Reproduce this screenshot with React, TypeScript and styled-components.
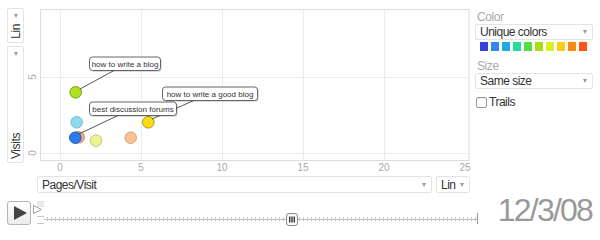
import React from 'react';
import styled, { createGlobalStyle } from 'styled-components';

const GlobalStyle = createGlobalStyle`
  html, body { margin: 0; padding: 0; background: #fff; }
  body { font-family: "Liberation Sans", Arial, sans-serif; }
`;

const Frame = styled.div`
  width: 600px;
  height: 229px;
  overflow: hidden;
  display: flex;
  flex-direction: column;
  background: #fff;
`;

const TopRow = styled.div`
  display: flex;
  height: 172px;
  padding-left: 7px;
`;

const YControls = styled.div`
  width: 17px;
  display: flex;
  flex-direction: column;
  gap: 3px;
  padding-top: 8px;
`;

const VSelect = styled.div<{ $h: number }>`
  height: ${(p) => p.$h}px;
  box-sizing: border-box;
  border: 1px solid #e4e4e4;
  border-radius: 2px;
  display: flex;
  flex-direction: column;
  align-items: center;
  justify-content: space-between;
  padding: 5px 0 3px;
`;

const VText = styled.span`
  writing-mode: vertical-rl;
  transform: rotate(180deg);
  font-size: 12px;
  letter-spacing: -0.4px;
  line-height: 14px;
  color: #333;
`;

const Arrow = styled.span`
  width: 0;
  height: 0;
  border-left: 2.5px solid transparent;
  border-right: 2.5px solid transparent;
  border-top: 4px solid #999;
`;

const ChartSvg = styled.svg`
  display: block;
  margin-left: 4px;
  width: 444px;
  height: 172px;
  flex: none;
`;

const SidePanel = styled.div`
  margin-left: 3px;
  width: 118px;
  display: flex;
  flex-direction: column;
  padding-top: 10px;
`;

const PanelLabel = styled.div<{ $mt?: number }>`
  font-size: 12px;
  letter-spacing: -0.4px;
  line-height: 14px;
  color: #aaa;
  margin-top: ${(p) => p.$mt ?? 0}px;
  padding-left: 2px;
`;

const HSelect = styled.div<{ $w: number; $h?: number }>`
  width: ${(p) => p.$w}px;
  height: ${(p) => p.$h ?? 16}px;
  box-sizing: border-box;
  border: 1px solid #e4e4e4;
  border-radius: 2px;
  display: flex;
  align-items: center;
  justify-content: space-between;
  padding: 0 5px 0 4px;
  font-size: 12px;
  letter-spacing: -0.5px;
  line-height: 14px;
  color: #333;
  flex: none;
`;

const Swatches = styled.div`
  display: flex;
  gap: 3px;
  margin-top: 2px;
  padding-left: 5px;
`;

const Swatch = styled.span<{ $c: string }>`
  width: 8px;
  height: 9px;
  background: ${(p) => p.$c};
`;

const TrailsRow = styled.label`
  display: flex;
  align-items: center;
  gap: 2px;
  margin-top: 6px;
  font-size: 12px;
  letter-spacing: -0.5px;
  line-height: 14px;
  color: #333;
  padding-left: 1px;
`;

const CheckBox = styled.span`
  width: 11px;
  height: 11px;
  box-sizing: border-box;
  border: 1px solid #999;
  border-radius: 2px;
  background: #fff;
  box-shadow: inset 0 1px 1px rgba(0, 0, 0, 0.08);
`;

const XRow = styled.div`
  display: flex;
  gap: 4px;
  margin-top: 4px;
  padding-left: 37px;
`;

const PlayRow = styled.div`
  display: flex;
  align-items: flex-start;
  margin-top: 5px;
  padding-left: 7px;
  height: 31px;
`;

const PlayButton = styled.div`
  margin-top: 3px;
  width: 24px;
  height: 24px;
  box-sizing: border-box;
  border: 1px solid #b5b5b5;
  border-radius: 3px;
  background: linear-gradient(#ffffff, #ececec);
  display: flex;
  align-items: center;
  justify-content: center;
  flex: none;
`;

const PlayTriangle = styled.span`
  width: 0;
  height: 0;
  margin-left: 2px;
  border-top: 7px solid transparent;
  border-bottom: 7px solid transparent;
  border-left: 13px solid #444;
`;

const TimelineSvg = styled.svg`
  display: block;
  width: 449px;
  height: 30px;
  flex: none;
`;

const DateLabel = styled.div`
  margin-left: auto;
  padding-right: 8px;
  font-size: 32px;
  letter-spacing: -1.8px;
  line-height: 30px;
  color: #999;
  margin-top: -3px;
`;

const swatchColors = [
  '#3344dd',
  '#3388ee',
  '#22aadd',
  '#22dd99',
  '#55dd44',
  '#aadd11',
  '#ddee22',
  '#ffcc11',
  '#ff8811',
  '#ff5511',
];

const xTicks = [
  { v: '0', x: 60 },
  { v: '5', x: 141 },
  { v: '10', x: 222 },
  { v: '15', x: 303 },
  { v: '20', x: 384 },
  { v: '25', x: 465 },
];

const yTicks = [
  { v: '5', y: 77 },
  { v: '0', y: 153 },
];

type Bubble = { x: number; y: number; fill: string; stroke: string };

const bubbles: Bubble[] = [
  { x: 78.7, y: 137.3, fill: '#f4a98c', stroke: '#c88066' },
  { x: 76.7, y: 122.3, fill: '#91d9ee', stroke: '#6fb3c8' },
  { x: 96, y: 140.7, fill: '#eef28e', stroke: '#bcbd78' },
  { x: 130.7, y: 137.7, fill: '#fdc092', stroke: '#cf9a72' },
  { x: 75.7, y: 92.3, fill: '#aee31f', stroke: '#6f9312' },
  { x: 75.3, y: 137.7, fill: '#2b7cf0', stroke: '#1b52aa' },
  { x: 148.3, y: 122.3, fill: '#fbdc12', stroke: '#a48d16' },
];

type Tip = { x: number; y: number; w: number; text: string; line: [number, number, number, number] };

const tips: Tip[] = [
  { x: 89.5, y: 57, w: 71, text: 'how to write a blog', line: [115, 70, 80, 89] },
  { x: 162.5, y: 87, w: 95, text: 'how to write a good blog', line: [195, 100, 152, 119] },
  { x: 89.5, y: 102, w: 87, text: 'best discussion forums', line: [119, 115, 79, 134] },
];

function Chart() {
  return (
    <ChartSvg viewBox="28 0 444 172">
      <rect x={40.5} y={9.5} width={428.5} height={151} fill="#fff" stroke="#dcdcdc" />
      {xTicks.slice(0, 5).map((t) => (
        <line key={'gx' + t.v} x1={t.x + 0.5} y1={10} x2={t.x + 0.5} y2={160} stroke="#ececec" />
      ))}
      {yTicks.map((t) => (
        <line key={'gy' + t.v} x1={41} y1={t.y + 0.5} x2={468.5} y2={t.y + 0.5} stroke="#ececec" />
      ))}
      {xTicks.map((t) => (
        <text
          key={'lx' + t.v}
          x={t.x}
          y={170.5}
          textAnchor="middle"
          fontSize={10}
          fill="#aaa"
          fontFamily='"Liberation Sans", Arial, sans-serif'
        >
          {t.v}
        </text>
      ))}
      {yTicks.map((t) => (
        <text
          key={'ly' + t.v}
          transform={`translate(35.5 ${t.y}) rotate(-90)`}
          textAnchor="middle"
          fontSize={10}
          fill="#aaa"
          fontFamily='"Liberation Sans", Arial, sans-serif'
        >
          {t.v}
        </text>
      ))}
      {bubbles.map((b, i) => (
        <circle key={'b' + i} cx={b.x} cy={b.y} r={5.8} fill={b.fill} stroke={b.stroke} strokeWidth={0.9} />
      ))}
      {tips.map((t) => (
        <line
          key={'l' + t.text}
          x1={t.line[0]}
          y1={t.line[1]}
          x2={t.line[2]}
          y2={t.line[3]}
          stroke="#444"
          strokeWidth={0.9}
        />
      ))}
      {tips.map((t) => (
        <g key={'t' + t.text}>
          <rect x={t.x + 1.2} y={t.y + 1.2} width={t.w} height={13.5} rx={3} fill="#000" opacity={0.18} />
          <rect x={t.x} y={t.y} width={t.w} height={13.5} rx={3} fill="#fff" stroke="#555" strokeWidth={0.9} />
          <text
            x={t.x + t.w / 2}
            y={t.y + 10}
            textAnchor="middle"
            fontSize={8}
            fill="#333"
            fontFamily='"Liberation Sans", Arial, sans-serif'
          >
            {t.text}
          </text>
        </g>
      ))}
    </ChartSvg>
  );
}

function Timeline() {
  const ticks: string[] = [];
  for (let x = 47; x < 477; x += 4) {
    ticks.push(`M${x + 0.5} 217 V221`);
  }
  return (
    <TimelineSvg viewBox="31 198 449 30">
      <rect x={37} y={201} width={7} height={6} fill="#e2e2e2" />
      <line x1={37} y1={203.5} x2={44} y2={203.5} stroke="#f4f4f4" />
      <line x1={37} y1={205.5} x2={44} y2={205.5} stroke="#f4f4f4" />
      <polygon points="33.5,205.5 41.5,209.5 33.5,213.5" fill="#fff" stroke="#999" strokeWidth={0.9} />
      <line x1={37} y1={216.5} x2={44} y2={216.5} stroke="#c8c8c8" />
      <line x1={37} y1={223.5} x2={44} y2={223.5} stroke="#c8c8c8" />
      <line x1={44} y1={219.5} x2={477} y2={219.5} stroke="#bdbdbd" />
      <path d={ticks.join(' ')} stroke="#c4c4c4" strokeWidth={1} />
      <line x1={477.5} y1={213} x2={477.5} y2={224} stroke="#999" />
      <rect x={286.5} y={213.5} width={11} height={12} rx={2.5} fill="#fafafa" stroke="#888" />
      <rect x={289} y={216.5} width={1.4} height={6} fill="#333" />
      <rect x={291.3} y={216.5} width={1.4} height={6} fill="#333" />
      <rect x={293.6} y={216.5} width={1.4} height={6} fill="#333" />
    </TimelineSvg>
  );
}

export default function App() {
  return (
    <>
      <GlobalStyle />
      <Frame>
        <TopRow>
          <YControls>
            <VSelect $h={35}>
              <Arrow />
              <VText>Lin</VText>
            </VSelect>
            <VSelect $h={117}>
              <Arrow />
              <VText>Visits</VText>
            </VSelect>
          </YControls>
          <Chart />
          <SidePanel>
            <PanelLabel>Color</PanelLabel>
            <HSelect $w={118}>
              <span>Unique colors</span>
              <Arrow />
            </HSelect>
            <Swatches>
              {swatchColors.map((c) => (
                <Swatch key={c} $c={c} />
              ))}
            </Swatches>
            <PanelLabel $mt={8}>Size</PanelLabel>
            <HSelect $w={118}>
              <span>Same size</span>
              <Arrow />
            </HSelect>
            <TrailsRow>
              <CheckBox />
              <span>Trails</span>
            </TrailsRow>
          </SidePanel>
        </TopRow>
        <XRow>
          <HSelect $w={395} $h={17}>
            <span>Pages/Visit</span>
            <Arrow />
          </HSelect>
          <HSelect $w={34} $h={17}>
            <span>Lin</span>
            <Arrow />
          </HSelect>
        </XRow>
        <PlayRow>
          <PlayButton>
            <PlayTriangle />
          </PlayButton>
          <Timeline />
          <DateLabel>12/3/08</DateLabel>
        </PlayRow>
      </Frame>
    </>
  );
}
